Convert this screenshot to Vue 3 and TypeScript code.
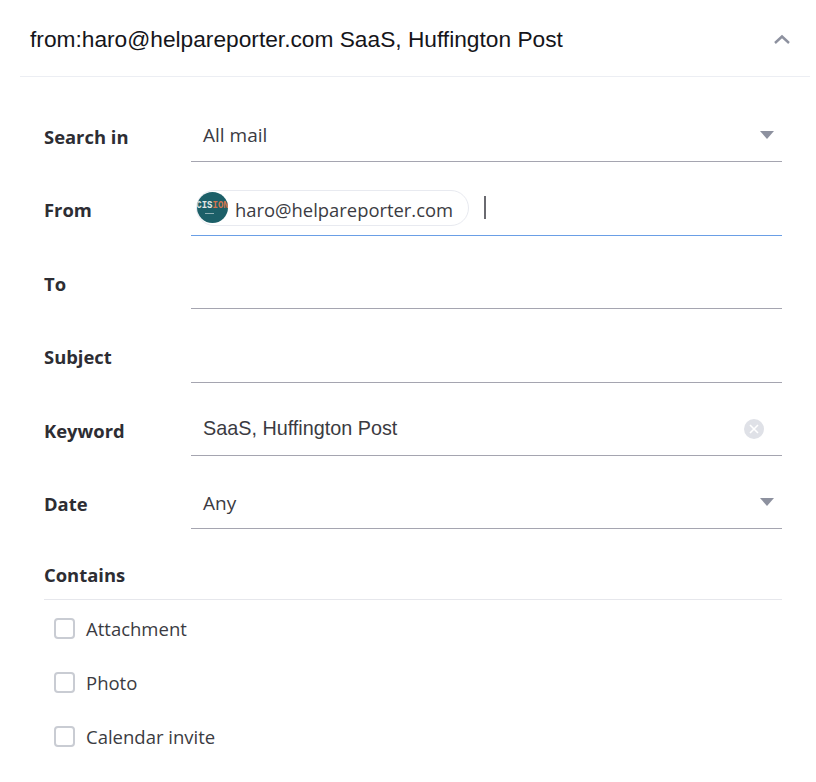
<script setup lang="ts">
interface Row { label: string; kind: 'select' | 'chip' | 'empty' | 'clear'; value?: string }
const rows: Row[] = [
  { label: 'Search in', kind: 'select', value: 'All mail' },
  { label: 'From', kind: 'chip' },
  { label: 'To', kind: 'empty' },
  { label: 'Subject', kind: 'empty' },
  { label: 'Keyword', kind: 'clear', value: 'SaaS, Huffington Post' },
  { label: 'Date', kind: 'select', value: 'Any' },
]
const checks = ['Attachment', 'Photo', 'Calendar invite']
</script>

<template>
  <div class="panel">
    <header class="head">
      <h1 class="query">from:haro@helpareporter.com SaaS, Huffington Post</h1>
      <svg class="chev" width="18" height="12" viewBox="0 0 18 12"><path d="M2 10 L9 3.5 L16 10" fill="none" stroke="#8d919f" stroke-width="2.4"/></svg>
    </header>
    <form class="form" @submit.prevent>
      <div v-for="r in rows" :key="r.label" class="row">
        <div class="label">{{ r.label }}</div>
        <div class="field" :class="{ focus: r.kind === 'chip' }">
          <template v-if="r.kind === 'chip'">
            <span class="chip">
              <span class="avatar">
                <span class="avatar-text">CIS<span class="o">ION</span></span>
                <span class="avatar-sub"></span>
              </span>
              <span class="chip-text">haro@helpareporter.com</span>
            </span>
            <span class="caret"></span>
          </template>
          <span v-else-if="r.value" class="value" :class="{ arial: r.kind === 'clear', first: r.value === 'All mail' }">{{ r.value }}</span>
          <svg v-if="r.kind === 'select'" class="tri" width="14" height="8" viewBox="0 0 14 8"><path d="M0 0 H14 L7 8 Z" fill="#8d919f"/></svg>
          <svg v-if="r.kind === 'clear'" class="clear" width="20" height="20" viewBox="0 0 20 20"><circle cx="10" cy="10" r="10" fill="#dfe1e7"/><path d="M6 6 L14 14 M14 6 L6 14" stroke="#fff" stroke-width="1.6"/></svg>
        </div>
      </div>
      <div class="contains">Contains</div>
      <div class="checks">
        <label v-for="c in checks" :key="c" class="check"><span class="box"></span><span>{{ c }}</span></label>
      </div>
    </form>
  </div>
</template>

<style scoped>
.panel { width: 816px; height: 782px; background: #fff; overflow: hidden; font-family: "Open Sans", "Noto Sans", sans-serif; color: #33333a; }
.head { margin: 0 6px 0 20px; height: 77px; padding: 2px 19px 0 10px; box-sizing: border-box; border-bottom: 1px solid #eceef3; display: flex; align-items: center; justify-content: space-between; }
.query { margin: 0; font: 400 22.72px/1 "Liberation Sans", Arial, sans-serif; color: #15151a; }
.chev { display: block; margin-top: -1px; }
.form { padding: 12px 34px 0 44px; }
.row { display: flex; height: 73.4px; }
.label { width: 147px; padding-top: 36px; font-size: 18.4px; line-height: 24px; font-weight: 700; color: #2d2d33; }
.field { flex: 1; position: relative; border-bottom: 1px solid #a5a5b0; display: flex; align-items: center; padding: 22px 6px 0 6px; box-sizing: border-box; }
.field.focus { border-bottom-color: #6a9fe6; }
.value { margin-left: 6px; font-size: 19px; color: #3b3b42; }
.value.first { margin-top: -2px; }
.value.arial { font-family: "Liberation Sans", Arial, sans-serif; font-size: 19.8px; margin-top: -2px; }
.chip { display: inline-flex; align-items: center; height: 36px; width: 273px; box-sizing: border-box; border: 1px solid #e8eaf0; border-radius: 18px; margin: -4px 0 0 -1px; }
.avatar { width: 31px; height: 31px; border-radius: 50%; background: #1c5f68; display: flex; flex-direction: column; align-items: center; justify-content: center; overflow: hidden; flex: none; }
.avatar-text { font: 700 9px/9px "Liberation Mono", monospace; color: #e4e7e4; white-space: nowrap; transform: scaleY(1.2); }
.avatar-text .o { color: #d6764f; }
.avatar-sub { width: 9px; height: 1px; margin: 2px 0 0 -6px; background: #8fb0b4; }
.chip-text { margin-left: 7px; padding-top: 4px; font-size: 18.4px; color: #3b3b42; white-space: nowrap; }
.caret { width: 1.5px; height: 23px; background: #6a6a70; margin: -4px 0 0 15px; }
.tri { position: absolute; right: 8px; top: 42px; }
.clear { position: absolute; right: 18px; top: 36px; }
.contains { margin-top: 34px; height: 37px; border-bottom: 1px solid #e6e7ec; font-size: 18.4px; line-height: 24px; font-weight: 700; color: #2d2d33; box-sizing: border-box; }
.checks { padding: 1px 0 0 10px; }
.check { display: flex; align-items: center; gap: 11px; height: 54px; font-size: 18.5px; color: #3b3b42; }
.box { width: 21px; height: 21px; box-sizing: border-box; border: 2px solid #c9ccd3; border-radius: 4px; }
</style>
